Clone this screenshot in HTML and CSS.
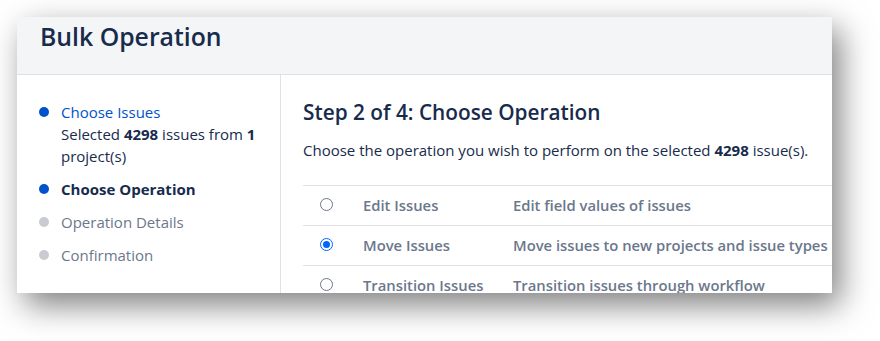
FILE: index.html
```html
<!DOCTYPE html>
<html lang="en">
<head>
    <meta charset="UTF-8">
    <title>Bulk Operation</title>
    <link rel="stylesheet" href="styles.css">
</head>
<body>
    <div class="card">
        <div class="card-header">
            <h1>Bulk Operation</h1>
        </div>
        <div class="card-body">
            <ul class="steps">
                <li class="step done">
                    <span class="dot"></span>
                    <div>
                        <a href="#">Choose Issues</a>
                        <div class="step-note">Selected <b>4298</b> issues from <b>1</b> project(s)</div>
                    </div>
                </li>
                <li class="step current">
                    <span class="dot"></span>
                    <div>Choose Operation</div>
                </li>
                <li class="step">
                    <span class="dot"></span>
                    <div>Operation Details</div>
                </li>
                <li class="step">
                    <span class="dot"></span>
                    <div>Confirmation</div>
                </li>
            </ul>

            <div class="main">
                <h2>Step 2 of 4: Choose Operation</h2>
                <p class="lead">Choose the operation you wish to perform on the selected <b>4298</b> issue(s).</p>

                <div class="ops">
                    <label class="op-row">
                        <span class="radio"></span>
                        <span class="op-name">Edit Issues</span>
                        <span class="op-desc">Edit field values of issues</span>
                    </label>
                    <label class="op-row">
                        <span class="radio checked"></span>
                        <span class="op-name">Move Issues</span>
                        <span class="op-desc">Move issues to new projects and issue types</span>
                    </label>
                    <label class="op-row">
                        <span class="radio"></span>
                        <span class="op-name">Transition Issues</span>
                        <span class="op-desc">Transition issues through workflow</span>
                    </label>
                </div>
            </div>
        </div>
    </div>
</body>
</html>
```

FILE: styles.css
```css
html {
    height: 100%;
}

body {
    margin: 0;
    min-height: 100%;
    box-sizing: border-box;
    padding: 17px 0 0 17px;
    background: #fff;
    font-family: "Open Sans", "Noto Sans", sans-serif;
    color: #172b4d;
}

.card {
    width: 815px;
    height: 276px;
    overflow: hidden;
    background: #fff;
    box-shadow: 8px 12px 30px rgba(0, 0, 0, 0.5);
}

.card-header {
    height: 58px;
    background: #f4f5f7;
    border-bottom: 1px solid #dfe1e6;
    padding: 1px 0 0 23px;
    box-sizing: border-box;
}

.card-header h1 {
    margin: 0;
    font-size: 24.8px;
    line-height: 36px;
    font-weight: 600;
    color: #172b4d;
}

.card-body {
    display: flex;
    height: 218px;
}

.steps {
    list-style: none;
    margin: 0;
    padding: 26px 10px 0 22px;
    width: 231px;
    border-right: 1px solid #dfe1e6;
    font-size: 15px;
    line-height: 22px;
}

.step {
    display: flex;
    gap: 12px;
    margin-bottom: 11px;
    color: #6b778c;
}

.step .dot {
    flex: none;
    width: 10px;
    height: 10px;
    margin-top: 6px;
    border-radius: 50%;
    background: #c8cbd0;
}

.step.done .dot,
.step.current .dot {
    background: #0052cc;
}

.step a {
    color: #0052cc;
    text-decoration: none;
}

.step-note {
    color: #172b4d;
}

.step.current {
    color: #172b4d;
    font-weight: 700;
}

.main {
    flex: 1;
    padding: 23px 0 0 22px;
}

.main h2 {
    margin: 0;
    font-size: 20.8px;
    line-height: 28px;
    font-weight: 600;
    color: #172b4d;
}

.lead {
    margin: 14px 0 0;
    font-size: 15px;
    line-height: 20px;
    color: #172b4d;
}

.ops {
    margin-top: 25px;
}

.op-row {
    display: grid;
    grid-template-columns: 60px 150px 1fr;
    align-items: center;
    height: 37px;
    padding-bottom: 2px;
    border-top: 1px solid #dfe1e6;
    font-size: 14.8px;
    font-weight: 600;
    color: #6b778c;
}

.radio {
    justify-self: start;
    margin-left: 17px;
    width: 11px;
    height: 11px;
    border: 1px solid #6b778c;
    border-radius: 50%;
    position: relative;
}

.radio.checked {
    border-color: #0065ff;
    background: #fff;
}

.radio.checked::after {
    content: "";
    position: absolute;
    left: 2px;
    top: 2px;
    width: 7px;
    height: 7px;
    border-radius: 50%;
    background: #0065ff;
}
```
